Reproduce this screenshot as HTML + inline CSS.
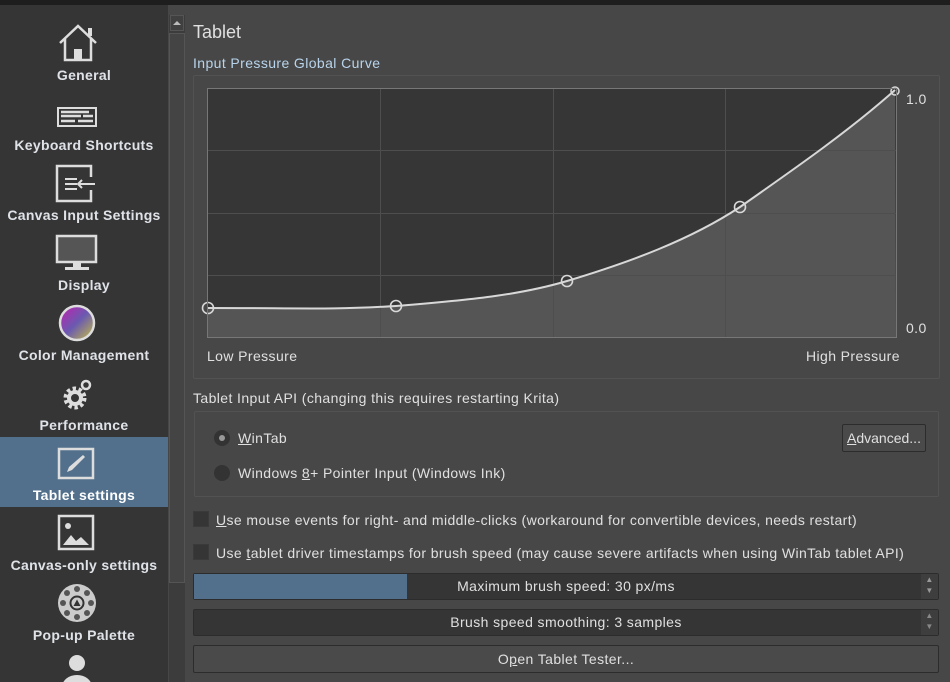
<!DOCTYPE html>
<html><head><meta charset="utf-8"><style>
*{margin:0;padding:0;box-sizing:border-box}
body{width:950px;height:682px;overflow:hidden;background:#474747;font-family:"Liberation Sans",sans-serif;color:#e0e0e0;position:relative}
.top{position:absolute;left:0;top:0;width:950px;height:5px;background:#1e1e1e}
.side{position:absolute;left:0;top:5px;width:168px;height:677px;background:#353535;overflow:hidden}
.item{position:absolute;left:0;width:168px;height:70px;text-align:center}
.item .lbl{position:absolute;left:0;right:0;font-weight:bold;font-size:14px;color:#dfe3e8;white-space:nowrap;letter-spacing:0.3px}
.item svg{position:absolute;left:52px}
.sel{background:#52708c}
.sb{position:absolute;left:169px;top:15px;width:16px;height:667px;background:#3c3c3c}
.abs{position:absolute;white-space:nowrap;font-size:14px;color:#e0e0e0;letter-spacing:0.4px}
.box{position:absolute;border:1px solid #525252;border-radius:2px}
.chk{position:absolute;width:16px;height:16px;background:#353535;border:1px solid #3a3a3a}
.spin{position:absolute;left:193px;width:746px;height:27px;background:#353535;border:1px solid #2c2c2c;border-radius:2px;font-size:14px;text-align:center;line-height:25px;letter-spacing:0.4px}
.btn{position:absolute;background:#4a4a4a;border:1px solid #2c2c2c;border-radius:2px;font-size:14px;text-align:center;letter-spacing:0.4px}
</style></head><body>
<div class="top"></div>
<div class="side">
 <div class="item" style="top:10px">
  <svg width="52" height="40" viewBox="0 0 52 40" style="top:8px;left:52px"><path d="M8 20 L26 3 L44 20 M13 16 V37 H39 V16" fill="none" stroke="#ddd" stroke-width="2.5"/><rect x="22" y="26" width="8" height="11" fill="#ddd"/><rect x="36" y="5" width="4" height="8" fill="#ddd"/></svg>
  <div class="lbl" style="top:52px">General</div></div>
 <div class="item" style="top:80px">
  <svg width="52" height="40" viewBox="0 0 52 40" style="top:14px;left:51px"><rect x="7" y="9" width="38" height="18" fill="none" stroke="#ddd" stroke-width="2"/><path d="M10 13h28M10 17h20M32 17h10M10 22h14M27 22h15" stroke="#ddd" stroke-width="2.5"/></svg>
  <div class="lbl" style="top:52px">Keyboard Shortcuts</div></div>
 <div class="item" style="top:150px">
  <svg width="52" height="40" viewBox="0 0 52 40" style="top:8px;left:51px"><path d="M40 14 V3 H6 V38 H40 V27" fill="none" stroke="#ddd" stroke-width="2.5"/><path d="M14 16h12M14 21h12M14 26h12M28 21h16M31 17l-4 4 4 4" fill="none" stroke="#ddd" stroke-width="2"/></svg>
  <div class="lbl" style="top:52px">Canvas Input Settings</div></div>
 <div class="item" style="top:220px">
  <svg width="52" height="40" viewBox="0 0 52 40" style="top:8px;left:51px"><rect x="6" y="3" width="39" height="26" fill="#555" stroke="#ddd" stroke-width="2.5"/><rect x="22" y="30" width="8" height="4" fill="#ddd"/><rect x="14" y="34" width="24" height="3" fill="#ddd"/></svg>
  <div class="lbl" style="top:52px">Display</div></div>
 <div class="item" style="top:290px">
  <svg width="52" height="40" viewBox="0 0 52 40" style="top:8px;left:51px"><defs><linearGradient id="g" x1="0" y1="0" x2="1" y2="1"><stop offset="0" stop-color="#c21fb0"/><stop offset=".5" stop-color="#6a5ab0"/><stop offset="1" stop-color="#c8c040"/></linearGradient></defs><circle cx="26" cy="20" r="17" fill="url(#g)" stroke="#ddd" stroke-width="2.5"/></svg>
  <div class="lbl" style="top:52px">Color Management</div></div>
 <div class="item" style="top:360px">
  <svg width="52" height="40" viewBox="0 0 52 40" style="top:8px;left:51px"><circle cx="24" cy="25" r="9" fill="none" stroke="#ddd" stroke-width="5" stroke-dasharray="3.2 2.5"/><circle cx="24" cy="25" r="6" fill="none" stroke="#ddd" stroke-width="4"/><circle cx="35" cy="12" r="4" fill="none" stroke="#ddd" stroke-width="2.5"/></svg>
  <div class="lbl" style="top:52px">Performance</div></div>
 <div class="item sel" style="top:432px">
  <svg width="52" height="40" viewBox="0 0 52 40" style="top:8px;left:51px"><rect x="8" y="4" width="34" height="29" fill="none" stroke="#ddd" stroke-width="2.5"/><path d="M16 27 L18 22 L32 10 L34 12 L21 25 Z" fill="#ddd"/></svg>
  <div class="lbl" style="top:50px;color:#fff">Tablet settings</div></div>
 <div class="item" style="top:500px">
  <svg width="52" height="40" viewBox="0 0 52 40" style="top:8px;left:51px"><rect x="8" y="3" width="34" height="33" fill="none" stroke="#ddd" stroke-width="2.5"/><circle cx="17" cy="13" r="3" fill="#ddd"/><path d="M12 32 L20 22 L25 28 L30 24 L38 32 Z" fill="#ddd"/></svg>
  <div class="lbl" style="top:52px">Canvas-only settings</div></div>
 <div class="item" style="top:570px">
  <svg width="52" height="40" viewBox="0 0 52 40" style="top:8px;left:51px"><circle cx="26" cy="20" r="19" fill="#ccc"/><g fill="#555"><circle cx="26" cy="6" r="3"/><circle cx="36" cy="10" r="3"/><circle cx="40" cy="20" r="3"/><circle cx="36" cy="30" r="3"/><circle cx="26" cy="34" r="3"/><circle cx="16" cy="30" r="3"/><circle cx="12" cy="20" r="3"/><circle cx="16" cy="10" r="3"/></g><circle cx="26" cy="20" r="6.5" fill="none" stroke="#333" stroke-width="2"/><path d="M22.5 23 L26 16.5 L29.5 23 Z" fill="#333"/></svg>
  <div class="lbl" style="top:52px">Pop-up Palette</div></div>
 <div class="item" style="top:640px">
  <svg width="52" height="40" viewBox="0 0 52 40" style="top:8px;left:51px"><circle cx="26" cy="10" r="8" fill="#ddd"/><ellipse cx="26" cy="34" rx="15" ry="12" fill="#ddd"/></svg></div>
</div>
<div class="sb"><div style="position:absolute;left:1px;top:0;width:14px;height:16px;border:1px solid #555;background:#404040"></div><div style="position:absolute;left:4px;top:6px;border-left:4px solid transparent;border-right:4px solid transparent;border-bottom:4px solid #bbb"></div><div style="position:absolute;left:0;top:18px;width:16px;height:550px;background:#444;border:1px solid #555"></div></div>

<div class="abs" style="left:193px;top:22px;font-size:18px;letter-spacing:0">Tablet</div>
<div class="abs" style="left:193px;top:55px;font-size:14px;color:#b8d4ec">Input Pressure Global Curve</div>
<div class="box" style="left:193px;top:75px;width:747px;height:304px"></div>
<svg style="position:absolute;left:0;top:0" width="950" height="400">
 <rect x="207.5" y="88.5" width="689" height="249" fill="#363636" stroke="#777"/>
 <path d="M208 308 C300 308 330 310 396 306 C470 300 520 295 567 281 C630 262 690 240 740 207 C800 165 850 130 895 90 L896 337 L208 337 Z" fill="#555"/>
 <g stroke="#4e4e4e" stroke-width="1"><path d="M380.5 89v248M553.5 89v248M725.5 89v248M208 150.5h688M208 213.5h688M208 275.5h688"/></g>
 <path d="M208 308 C300 308 330 310 396 306 C470 300 520 295 567 281 C630 262 690 240 740 207 C800 165 850 130 895 90" fill="none" stroke="#d8d8d8" stroke-width="2"/>
 <g fill="none" stroke="#d8d8d8" stroke-width="1.6"><circle cx="208" cy="308" r="5.5"/><circle cx="396" cy="306" r="5.5"/><circle cx="567" cy="281" r="5.5"/><circle cx="740" cy="207" r="5.5"/><circle cx="895" cy="91" r="4"/></g>
 <rect x="207.5" y="88.5" width="689" height="249" fill="none" stroke="#777"/>
</svg>
<div class="abs" style="left:906px;top:91px">1.0</div>
<div class="abs" style="left:906px;top:320px">0.0</div>
<div class="abs" style="left:207px;top:348px">Low Pressure</div>
<div class="abs" style="left:806px;top:348px">High Pressure</div>

<div class="abs" style="left:193px;top:390px">Tablet Input API (changing this requires restarting Krita)</div>
<div class="box" style="left:194px;top:411px;width:745px;height:86px"></div>
<div style="position:absolute;left:214px;top:430px;width:16px;height:16px;border-radius:50%;background:#333"><div style="position:absolute;left:5px;top:5px;width:6px;height:6px;border-radius:50%;background:#999"></div></div>
<div class="abs" style="left:238px;top:430px"><u>W</u>inTab</div>
<div style="position:absolute;left:214px;top:465px;width:16px;height:16px;border-radius:50%;background:#333"></div>
<div class="abs" style="left:238px;top:465px">Windows <u>8</u>+ Pointer Input (Windows Ink)</div>
<div class="btn" style="left:842px;top:424px;width:84px;height:28px;line-height:26px;letter-spacing:0"><u>A</u>dvanced...</div>

<div class="chk" style="left:193px;top:511px"></div>
<div class="abs" style="left:216px;top:512px"><u>U</u>se mouse events for right- and middle-clicks (workaround for convertible devices, needs restart)</div>
<div class="chk" style="left:193px;top:544px"></div>
<div class="abs" style="left:216px;top:545px">Use <u>t</u>ablet driver timestamps for brush speed (may cause severe artifacts when using WinTab tablet API)</div>

<div class="spin" style="top:573px"><div style="position:absolute;left:0;top:0;width:213px;height:25px;background:#52708c"></div><span style="position:relative">Maximum brush speed: 30 px/ms</span><div style="position:absolute;right:0;top:0;width:17px;height:25px;background:#3e3e3e;font-size:8px;line-height:11px;color:#999">▲<br>▼</div></div>
<div class="spin" style="top:609px">Brush speed smoothing: 3 samples<div style="position:absolute;right:0;top:0;width:17px;height:25px;background:#3e3e3e;font-size:8px;line-height:11px;color:#888">▲<br>▼</div></div>
<div class="btn" style="left:193px;top:645px;width:746px;height:28px;line-height:26px">O<u>p</u>en Tablet Tester...</div>
</body></html>
